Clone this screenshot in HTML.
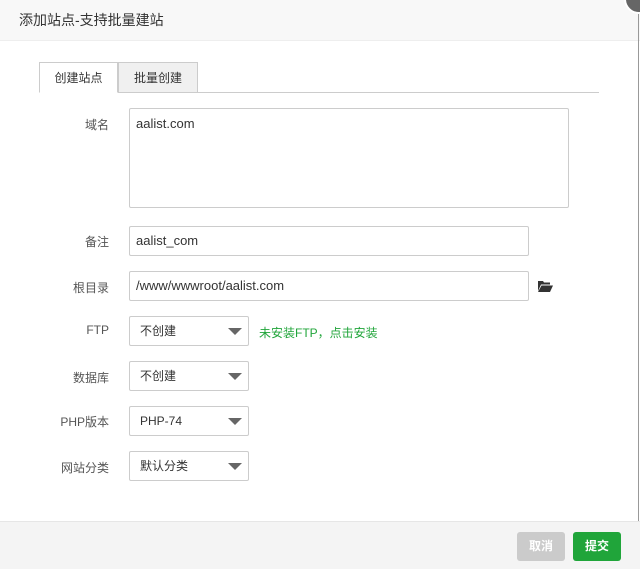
<!DOCTYPE html>
<html><head><meta charset="utf-8"><style>
*{box-sizing:border-box;margin:0;padding:0}
body{width:640px;height:569px;background:#fff;font-family:"Liberation Sans","Noto Sans CJK SC",sans-serif;font-size:12px;color:#333;position:relative;overflow:hidden}
.hd{position:absolute;left:0;top:0;width:640px;height:41px;background:#f8f8f8;border-bottom:1px solid #eee;font-size:14px;line-height:40px;padding-left:19px;color:#333}
.abs{position:absolute}
.tab{position:absolute;top:62px;height:31px;line-height:30px;text-align:center;font-size:12px}
.lbl{position:absolute;width:70px;text-align:right;left:39px;color:#555}
.inp{position:absolute;left:129px;border:1px solid #ccc;border-radius:2px;padding-left:6px;color:#333;font-size:13px}
.sel{position:absolute;left:129px;width:120px;height:30px;border:1px solid #ccc;border-radius:2px;line-height:28px;padding-left:10px;font-size:12px}
.sel:after{content:"";position:absolute;right:6px;top:11px;border-left:7px solid transparent;border-right:7px solid transparent;border-top:7px solid #666}
.ft{position:absolute;left:0;top:521px;width:640px;height:48px;background:#f4f4f4;border-top:1px solid #e6e6e6}
.btn{position:absolute;top:532px;width:48px;height:29px;border-radius:3px;color:#fff;font-size:12px;line-height:29px;text-align:center;font-weight:bold}
</style></head><body>
<div class="hd">添加站点-支持批量建站</div>
<div class="abs" style="left:638px;top:10px;width:1px;height:511px;background:#999"></div>
<div class="abs" style="left:624px;top:-16px;width:30px;height:30px;border-radius:50%;background:#666;border:2px solid #fff"></div>
<div class="abs" style="left:39px;top:92px;width:560px;height:1px;background:#ccc"></div>
<div class="tab" style="left:39px;width:79px;border:1px solid #ccc;border-bottom:1px solid #fff;background:#fff;color:#333">创建站点</div>
<div class="tab" style="left:118px;width:80px;border:1px solid #ccc;background:#f0f0f0;color:#333">批量创建</div>
<div class="lbl" style="top:116px">域名</div>
<div class="inp" style="top:108px;width:440px;height:100px;padding-top:7px">aalist.com</div>
<div class="lbl" style="top:233px">备注</div>
<div class="inp" style="top:226px;width:400px;height:30px;line-height:28px">aalist_com</div>
<div class="lbl" style="top:279px">根目录</div>
<div class="inp" style="top:271px;width:400px;height:30px;line-height:28px">/www/wwwroot/aalist.com</div>
<svg class="abs" style="left:538px;top:280px" width="15" height="12" viewBox="0 0 15 12"><path d="M0 1h5l1 1.5h6v2H3L0 11z" fill="#333"/><path d="M3.5 5.5H15L12 12H0z" fill="#333"/></svg>
<div class="lbl" style="top:323px">FTP</div>
<div class="sel" style="top:316px">不创建</div>
<div class="abs" style="left:259px;top:324px;color:#20a53a;font-size:12px">未安装FTP，点击安装</div>
<div class="lbl" style="top:369px">数据库</div>
<div class="sel" style="top:361px">不创建</div>
<div class="lbl" style="top:413px">PHP版本</div>
<div class="sel" style="top:406px">PHP-74</div>
<div class="lbl" style="top:459px">网站分类</div>
<div class="sel" style="top:451px">默认分类</div>
<div class="ft"></div>
<div class="btn" style="left:517px;background:#cbcbcb">取消</div>
<div class="btn" style="left:573px;background:#20a53a">提交</div>
</body></html>
